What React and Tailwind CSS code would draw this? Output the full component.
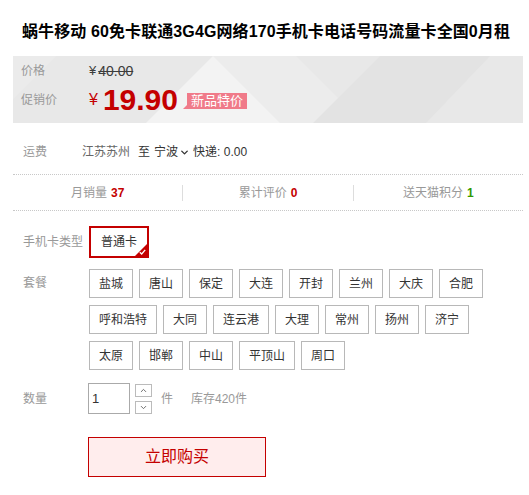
import { ChevronDown, ChevronUp } from 'lucide-react';

const packages = [
  ['盐城', '唐山', '保定', '大连', '开封', '兰州', '大庆', '合肥'],
  ['呼和浩特', '大同', '连云港', '大理', '常州', '扬州', '济宁'],
  ['太原', '邯郸', '中山', '平顶山', '周口'],
];

function BandPattern() {
  // soft diagonal facets behind the price block
  return (
    <svg className="absolute inset-0" width="510" height="67" viewBox="0 0 510 67">
      <rect width="510" height="67" fill="#e8e8e8" />
      <polygon points="0,0 43,0 0,43" fill="#ebebeb" />
      <polygon points="200,0 283,0 350,67 267,67" fill="#ececec" />
      <polygon points="133,67 200,0 267,67" fill="#f3f3f3" />
      <polygon points="367,0 477,0 413,67 300,67" fill="#e3e3e3" />
    </svg>
  );
}

function Label({ children }) {
  return (
    <div className="w-[67px] shrink-0 whitespace-nowrap pl-[10px] text-[12px] text-[#999]">{children}</div>
  );
}

export default function App() {
  return (
    <div
      className="w-[529px] bg-white pb-4 text-[#333]"
      style={{ fontFamily: '"Liberation Sans", "Noto Sans CJK SC", sans-serif' }}
    >
      <h1 className="pt-5 pl-[22px] text-[16px] font-bold leading-6 tracking-[0.1px] text-black whitespace-nowrap">
        蜗牛移动 60免卡联通3G4G网络170手机卡电话号码流量卡全国0月租
      </h1>

      <div className="ml-[13px] w-[510px]">
        {/* price band */}
        <div className="relative mt-3 h-[67px] overflow-hidden">
          <BandPattern />
          <div className="relative">
            <div className="flex h-[30px] items-center">
              <div className="w-[76px] shrink-0 pl-[8px] text-[12px] text-[#999]">价格</div>
              <span className="text-[13px] text-[#3c3c3c]">¥</span>
              <span className="ml-[2px] text-[14px] text-[#3c3c3c] line-through">40.00</span>
            </div>
            <div className="flex h-[28px] items-center">
              <div className="w-[76px] shrink-0 pl-[8px] text-[12px] text-[#999]">促销价</div>
              <span className="text-[16px] text-[#c40000]">¥</span>
              <span className="ml-[5px] text-[30px] font-bold leading-none text-[#c40000]">19.90</span>
              <span className="relative ml-[9px] mt-[2px] bg-[#f07a89] px-[4px] text-[13px] leading-[16px] text-white">
                新品特价
                <span className="absolute bottom-0 left-[-4px] h-0 w-0 border-b-[4px] border-l-[4px] border-b-[#f07a89] border-l-transparent" />
              </span>
            </div>
          </div>
        </div>

        {/* shipping */}
        <div className="flex items-center pt-[20px] pb-[13px] text-[12px] leading-[18px]">
          <div className="w-[69px] shrink-0 pl-[10px] text-[#999]">运费</div>
          <span className="text-[#666]">江苏苏州</span>
          <span className="ml-[8px]">至</span>
          <span className="ml-[4px]">宁波</span>
          <ChevronDown size={11} strokeWidth={3} className="ml-[1px] text-[#333]" />
          <span className="ml-[3px]">快递: 0.00</span>
        </div>

        {/* stats */}
        <div className="flex h-[37px] items-center border-y border-dotted border-[#c8c8c8] text-[12px] text-[#999]">
          <div className="flex flex-1 justify-center">
            月销量 <span className="ml-1 font-bold text-[#c40000]">37</span>
          </div>
          <div className="h-[16px] w-px bg-[#ddd]" />
          <div className="flex flex-1 justify-center">
            累计评价 <span className="ml-1 font-bold text-[#c40000]">0</span>
          </div>
          <div className="h-[16px] w-px bg-[#ddd]" />
          <div className="flex flex-1 justify-center">
            送天猫积分 <span className="ml-1 font-bold text-[#339900]">1</span>
          </div>
        </div>

        {/* card type */}
        <div className="mt-[15px] flex items-center">
          <Label>手机卡类型</Label>
          <div className="ml-[9px] relative flex h-[32px] items-center border-2 border-[#c40000] px-[10px] text-[12px]">
            普通卡
            <span className="absolute right-0 bottom-0 h-0 w-0 border-b-[12px] border-l-[12px] border-b-[#c40000] border-l-transparent" />
            <svg className="absolute right-[1px] bottom-[1px]" width="7" height="6" viewBox="0 0 7 6">
              <path d="M0.8 3.2 L2.7 5 L6.2 0.8" fill="none" stroke="#fff" strokeWidth="1.3" />
            </svg>
          </div>
        </div>

        {/* packages */}
        <div className="mt-[11px] flex">
          <Label>
            <div className="leading-[29px]">套餐</div>
          </Label>
          <div className="ml-[9px] flex flex-col gap-y-[7px]">
            {packages.map((row, i) => (
              <div key={i} className="flex gap-x-[6px]">
                {row.map((name) => (
                  <div
                    key={name}
                    className="flex h-[29px] items-center border border-[#b8b8b8] px-[9px] text-[12px] text-[#333]"
                  >
                    {name}
                  </div>
                ))}
              </div>
            ))}
          </div>
        </div>

        {/* quantity */}
        <div className="mt-[13px] flex items-center">
          <Label>数量</Label>
          <div className="ml-[8px] flex h-[31px] w-[42px] items-center border border-[#aaa] pl-[3px] text-[13px]">1</div>
          <div className="ml-[5px] flex flex-col gap-[4px]">
            <div className="flex h-[13px] w-[17px] items-center justify-center border border-[#bbb]">
              <ChevronUp size={9} strokeWidth={2.5} className="text-[#666]" />
            </div>
            <div className="flex h-[13px] w-[17px] items-center justify-center border border-[#bbb]">
              <ChevronDown size={9} strokeWidth={2.5} className="text-[#666]" />
            </div>
          </div>
          <span className="ml-[9px] text-[12px] text-[#999]">件</span>
          <span className="ml-[18px] text-[12px] text-[#999]">库存420件</span>
        </div>

        {/* buy */}
        <div className="mt-[23px] pl-[75px]">
          <button className="flex h-[40px] w-[178px] items-center justify-center border border-[#c40000] bg-[#ffeded] text-[16px] text-[#c40000]">
            立即购买
          </button>
        </div>
      </div>
    </div>
  );
}
